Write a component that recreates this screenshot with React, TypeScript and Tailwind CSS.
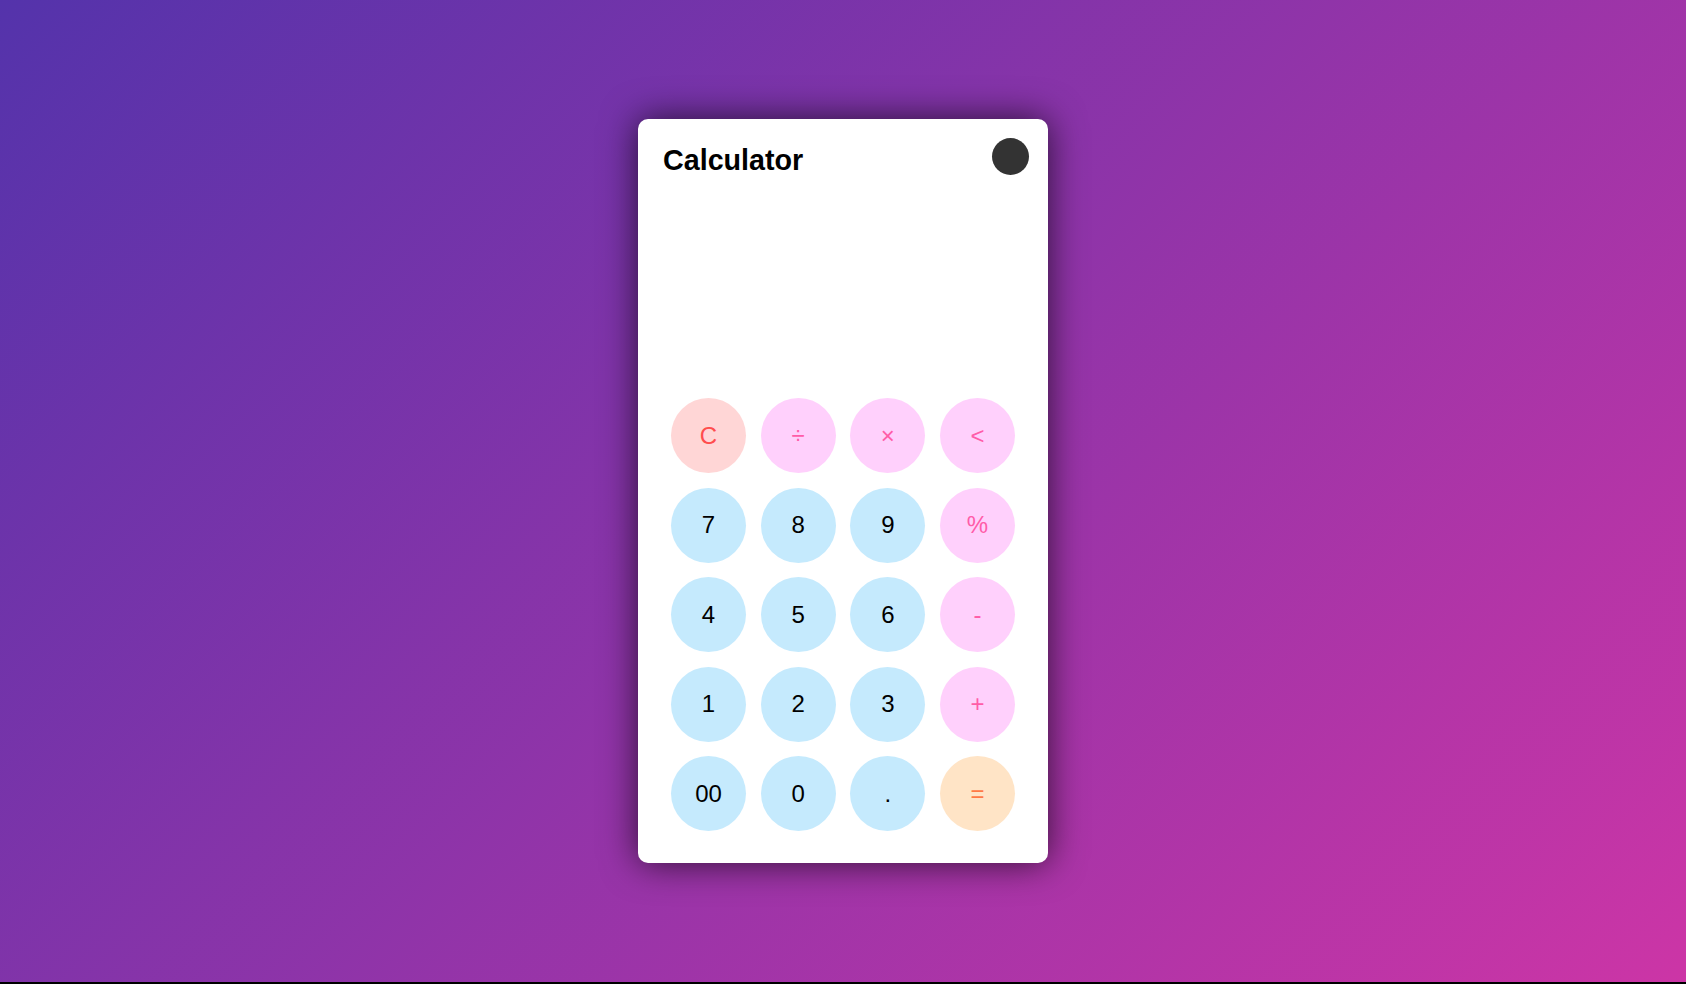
import React from 'react'

type Key = { label: string; kind: 'clear' | 'op' | 'num' | 'eq' }

const keys: Key[] = [
  { label: 'C', kind: 'clear' },
  { label: '÷', kind: 'op' },
  { label: '×', kind: 'op' },
  { label: '<', kind: 'op' },
  { label: '7', kind: 'num' },
  { label: '8', kind: 'num' },
  { label: '9', kind: 'num' },
  { label: '%', kind: 'op' },
  { label: '4', kind: 'num' },
  { label: '5', kind: 'num' },
  { label: '6', kind: 'num' },
  { label: '-', kind: 'op' },
  { label: '1', kind: 'num' },
  { label: '2', kind: 'num' },
  { label: '3', kind: 'num' },
  { label: '+', kind: 'op' },
  { label: '00', kind: 'num' },
  { label: '0', kind: 'num' },
  { label: '.', kind: 'num' },
  { label: '=', kind: 'eq' },
]

const kindClass: Record<Key['kind'], string> = {
  clear: 'bg-[#ffd6d6] text-[#ff4d4d]',
  op: 'bg-[#ffd0fc] text-[#ff5ca8]',
  num: 'bg-[#c5eafd] text-black',
  eq: 'bg-[#ffe4c6] text-[#ff7a45]',
}

export default function App() {
  return (
    <div className="bg-black font-['Liberation_Sans',Arial,sans-serif]">
      <div className="h-[982px] flex items-center justify-center bg-[linear-gradient(135deg,#5433ab,#cc35a6)]">
        <div className="relative w-[410px] h-[744px] bg-white rounded-[10px] shadow-[0_0_36px_rgba(0,0,0,0.7)] flex flex-col">
          <div className="pl-[25px] pt-[25px]">
            <h1 className="text-[28.7px] font-bold text-black leading-[normal]">Calculator</h1>
          </div>
          <div className="absolute top-[19px] right-[19px] w-[37px] h-[37px] rounded-full bg-[#333333]" />
          <div className="flex-1" />
          <div className="grid grid-cols-4 gap-x-[14.67px] gap-y-[14.5px] px-[33px] pb-8">
            {keys.map((k) => (
              <button
                key={k.label}
                className={`w-[75px] h-[75px] rounded-full flex items-center justify-center text-2xl ${kindClass[k.kind]}`}
              >
                {k.label}
              </button>
            ))}
          </div>
        </div>
      </div>
      <div className="h-[2px]" />
    </div>
  )
}
